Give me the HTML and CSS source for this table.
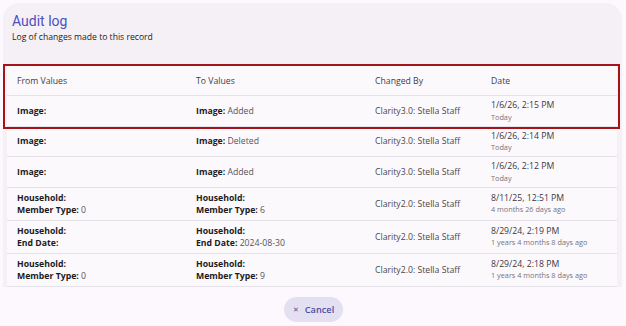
FILE: index.html
```html
<!DOCTYPE html>
<html>
<head>
<meta charset="utf-8">
<link rel="stylesheet" href="styles.css">
</head>
<body>
<div class="dialog">
  <div class="panel">
    <div class="head">
      <h1 class="title">Audit log</h1>
      <p class="subtitle">Log of changes made to this record</p>
    </div>
    <div class="table-wrap">
      <table class="log">
        <colgroup>
          <col class="c1"><col class="c2"><col class="c3"><col class="c4">
        </colgroup>
        <thead>
          <tr><th>From Values</th><th>To Values</th><th>Changed By</th><th>Date</th></tr>
        </thead>
        <tbody>
          <tr>
            <td><b>Image:</b></td>
            <td><b>Image:</b> Added</td>
            <td class="who">Clarity3.0: Stella Staff</td>
            <td><div class="when">1/6/26, 2:15 PM</div><div class="ago">Today</div></td>
          </tr>
          <tr>
            <td><b>Image:</b></td>
            <td><b>Image:</b> Deleted</td>
            <td class="who">Clarity3.0: Stella Staff</td>
            <td><div class="when">1/6/26, 2:14 PM</div><div class="ago">Today</div></td>
          </tr>
          <tr>
            <td><b>Image:</b></td>
            <td><b>Image:</b> Added</td>
            <td class="who">Clarity3.0: Stella Staff</td>
            <td><div class="when">1/6/26, 2:12 PM</div><div class="ago">Today</div></td>
          </tr>
          <tr>
            <td><b>Household:</b><br><b>Member Type:</b> 0</td>
            <td><b>Household:</b><br><b>Member Type:</b> 6</td>
            <td class="who">Clarity2.0: Stella Staff</td>
            <td><div class="when">8/11/25, 12:51 PM</div><div class="ago">4 months 26 days ago</div></td>
          </tr>
          <tr>
            <td><b>Household:</b><br><b>End Date:</b></td>
            <td><b>Household:</b><br><b>End Date:</b> 2024-08-30</td>
            <td class="who">Clarity2.0: Stella Staff</td>
            <td><div class="when">8/29/24, 2:19 PM</div><div class="ago">1 years 4 months 8 days ago</div></td>
          </tr>
          <tr>
            <td><b>Household:</b><br><b>Member Type:</b> 0</td>
            <td><b>Household:</b><br><b>Member Type:</b> 9</td>
            <td class="who">Clarity2.0: Stella Staff</td>
            <td><div class="when">8/29/24, 2:18 PM</div><div class="ago">1 years 4 months 8 days ago</div></td>
          </tr>
        </tbody>
      </table>
      <div class="highlight"></div>
    </div>
  </div>
  <div class="actions">
    <button class="cancel"><span class="x">✕</span>Cancel</button>
  </div>
</div>
</body>
</html>
```

FILE: styles.css
```css
html, body {
  margin: 0;
  padding: 0;
  background: #fdf8fd;
}
body {
  font-family: "Open Sans", "Noto Sans", sans-serif;
  color: #1d1b20;
  width: 626px;
  height: 326px;
  overflow: hidden;
}
.dialog {
  padding: 3px 4px 0 3px;
}
.panel {
  background: #f4f0f6;
  border-radius: 16px 16px 0 0;
  padding: 0 5px 0 4px;
}
.head {
  padding: 10px 0 0 5px;
  height: 58px;
  box-sizing: border-box;
}
.title {
  margin: 0;
  font-family: Roboto, "Noto Sans", sans-serif;
  font-weight: 400;
  font-size: 14px;
  line-height: 17px;
  color: #4c51bb;
}
.subtitle {
  margin: 2px 0 0;
  font-size: 8.6px;
  line-height: 11px;
  color: #1d1b20;
}
.table-wrap {
  position: relative;
  padding-top: 5px;
}
.log {
  width: 610px;
  border-collapse: collapse;
  table-layout: fixed;
  background: #fcf9fd;
  font-size: 8.7px;
}
.c1 { width: 179px; }
.c2 { width: 179px; }
.c3 { width: 116px; }
.c4 { width: 136px; }
.log th {
  text-align: left;
  font-weight: 400;
  color: #3f3d44;
  padding: 9px 10px 8px;
  line-height: 12px;
  border-bottom: 1.5px solid #e6e2e9;
}
.log td {
  padding: 4px 10px;
  line-height: 12px;
  vertical-align: middle;
  color: #55535a;
  border-bottom: 1.5px solid #e6e2e9;
}
.log td b {
  font-weight: 700;
  color: #1d1b20;
}
.log td.who {
  color: #48464c;
}
.when {
  color: #3a383e;
  line-height: 11.5px;
}
.ago {
  font-size: 7.3px;
  line-height: 10px;
  color: #75737a;
}
.highlight {
  position: absolute;
  left: -4px;
  right: -3px;
  top: 3px;
  height: 65px;
  border: 2.5px solid #a3141b;
  box-sizing: border-box;
  pointer-events: none;
}
.actions {
  display: flex;
  justify-content: center;
  padding-top: 10px;
}
.cancel {
  height: 25px;
  width: 59px;
  margin-left: 2px;
  border: none;
  border-radius: 13px;
  background: #e3e0f2;
  color: #4b4ea6;
  font-family: "Open Sans", sans-serif;
  font-weight: 600;
  font-size: 9.2px;
  padding: 0;
  display: flex;
  align-items: center;
  justify-content: center;
  gap: 6px;
}
.x {
  font-size: 7px;
  font-weight: 400;
}
```
